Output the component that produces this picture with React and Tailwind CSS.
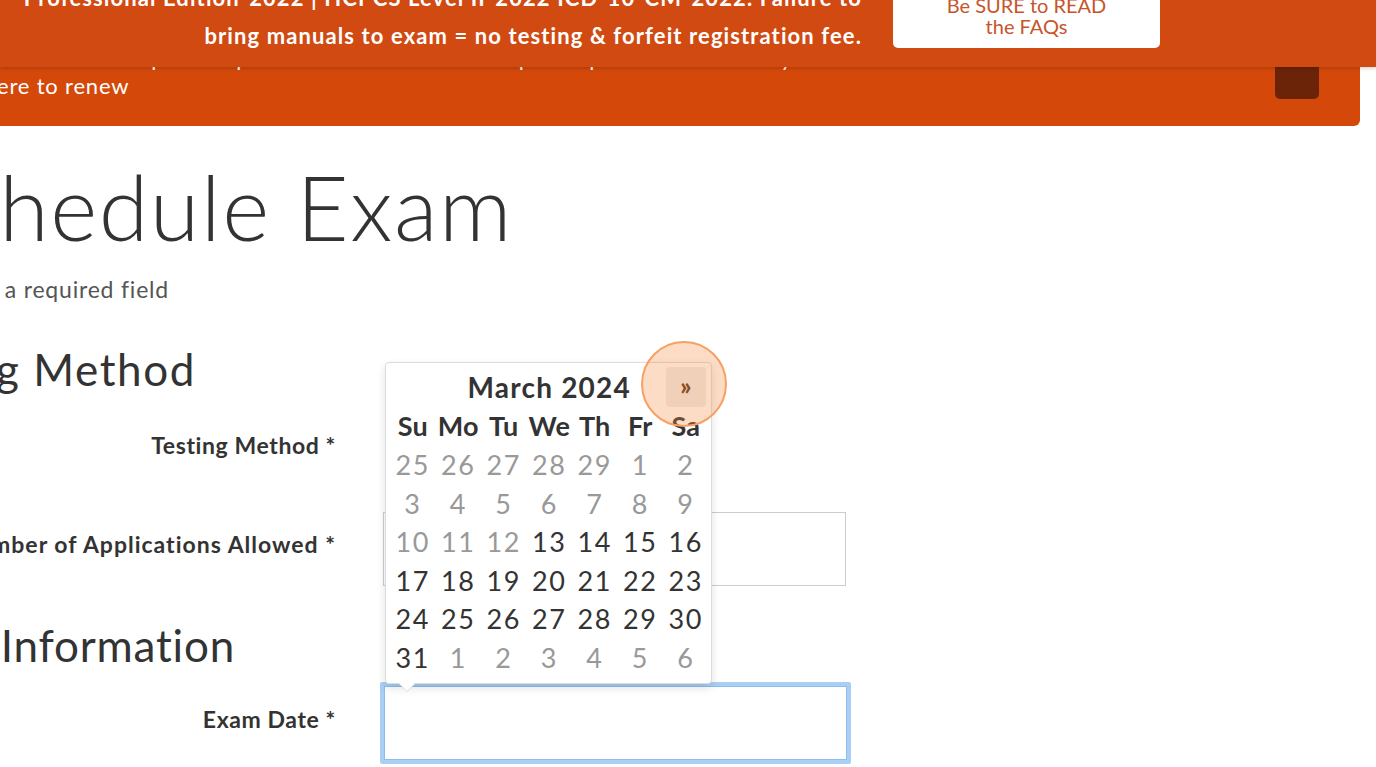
import React from "react";

const weeks = [
  [[25, 0], [26, 0], [27, 0], [28, 0], [29, 0], [1, 0], [2, 0]],
  [[3, 0], [4, 0], [5, 0], [6, 0], [7, 0], [8, 0], [9, 0]],
  [[10, 0], [11, 0], [12, 0], [13, 1], [14, 1], [15, 1], [16, 1]],
  [[17, 1], [18, 1], [19, 1], [20, 1], [21, 1], [22, 1], [23, 1]],
  [[24, 1], [25, 1], [26, 1], [27, 1], [28, 1], [29, 1], [30, 1]],
  [[31, 1], [1, 0], [2, 0], [3, 0], [4, 0], [5, 0], [6, 0]],
];

const dows = ["Su", "Mo", "Tu", "We", "Th", "Fr", "Sa"];

function Calendar() {
  return (
    <div className="absolute left-[385px] top-[362px] z-10 w-[327px] rounded-[4px] border border-[#dcdcdc] bg-white px-1 pt-1 pb-[6px] shadow-[0_4px_10px_rgba(0,0,0,0.12)]">
      {/* Pointer */}
      <div className="absolute -bottom-[9px] left-[12px] h-0 w-0 border-x-[9px] border-t-[9px] border-x-transparent border-t-[#dcdcdc]" />
      <div className="absolute -bottom-[8px] left-[13px] h-0 w-0 border-x-[8px] border-t-[8px] border-x-transparent border-t-white" />

      <div className="grid grid-cols-[repeat(7,45.5px)] text-center leading-none text-[#333]">
        <div className="h-[40px]" />
        <div className="col-span-5 flex h-[40px] items-center justify-center text-[28px] font-bold tracking-[1.2px]">
          March 2024
        </div>
        <div className="flex h-[40px] items-center justify-center">
          <div className="flex h-[40px] w-[40px] items-center justify-center rounded-[4px] bg-[#eeeeee] pb-[2px] text-[24px] font-black text-[#5a3420]">
            »
          </div>
        </div>

        {dows.map((d) => (
          <div key={d} className="flex h-[38.5px] items-center justify-center pb-[2px] text-[27px] font-bold tracking-[0.2px]">
            {d}
          </div>
        ))}

        {weeks.map((week, i) =>
          week.map(([n, active], j) => (
            <div
              key={`${i}-${j}`}
              className={`flex h-[38.5px] items-center justify-center text-[27px] tracking-[1.5px] ${
                active ? "text-[#333]" : "text-[#999]"
              }`}
            >
              {n}
            </div>
          ))
        )}
      </div>
    </div>
  );
}

export default function App() {
  return (
    <div className="relative h-[767px] w-[1376px] overflow-hidden bg-white font-['Lato',sans-serif] text-[#333]">
      {/* Fixed notice bar, lies over the renewal bar */}
      <div className="absolute inset-x-0 top-0 z-20 flex h-[67px] bg-[#d14a12] shadow-[0_2px_3px_rgba(0,0,0,0.15)]">
        <div className="-ml-[240px] -mt-[21px] w-[1102px] shrink-0 text-right text-[22px] font-bold leading-[38px] tracking-[1.1px] text-white">
          <p className="whitespace-nowrap">Professional Edition-2022 | HCPCS Level II-2022 ICD-10-CM-2022. Failure to</p>
          <p className="whitespace-nowrap">bring manuals to exam = no testing &amp; forfeit registration fee.</p>
        </div>
        <div className="ml-[31px] -mt-[14px] flex h-[62px] w-[267px] flex-col items-center justify-center rounded-b-[5px] bg-white pb-[3px] text-[20px] leading-[21px] text-[#c8542b]">
          <span>Be SURE to READ</span>
          <span>the FAQs</span>
        </div>
      </div>

      {/* Renewal bar */}
      <div className="mr-[16px] flex h-[126px] justify-between rounded-br-[6px] bg-[#d4490a] text-white">
        <div className="-ml-[16px] pt-[44px] text-[22px] leading-[28px] tracking-[0.8px]">
          <p className="whitespace-nowrap">Your membership has expired. An active membership is required to schedule your exam. Please click</p>
          <p className="whitespace-nowrap">here to renew</p>
        </div>
        <div className="mr-[41px] mt-[60px] h-[39px] w-[44px] shrink-0 rounded-b-[5px] bg-[#6b2407]" />
      </div>

      {/* Form */}
      <div className="-ml-[116px] mt-[30px] flex flex-col">
        <div className="flex w-[629px] justify-end">
          <h1 className="whitespace-nowrap text-[90px] font-light leading-[100px] tracking-[1.5px] text-[#333]">
            Schedule Exam
          </h1>
        </div>
        <div className="mt-[21px] flex w-[285px] justify-end">
          <p className="whitespace-nowrap text-[23px] leading-[24px] tracking-[0.8px] text-[#555]">
            * Indicates a required field
          </p>
        </div>

        <div className="mt-[42px] flex w-[312px] justify-end">
          <h2 className="whitespace-nowrap text-[44px] leading-[52px] tracking-[1.6px]">Testing Method</h2>
        </div>

        <div className="mt-[38px] flex items-center">
          <label className="w-[452px] text-right text-[23px] font-bold leading-[24px] tracking-[0.6px]">
            Testing Method *
          </label>
        </div>

        <div className="mt-[55px] flex items-start gap-[47px]">
          <label className="mt-[20px] w-[452px] whitespace-nowrap text-right text-[23px] font-bold leading-[24px] tracking-[1px]">
            Number of Applications Allowed *
          </label>
          <input className="h-[74px] w-[463px] border border-[#cccccc] bg-white" />
        </div>

        <div className="mt-[33px] flex w-[351px] justify-end">
          <h2 className="whitespace-nowrap text-[44px] leading-[52px] tracking-[0.8px]">Exam Information</h2>
        </div>

        <div className="mt-[11px] flex items-start gap-[44px]">
          <label className="mt-[25px] w-[452px] text-right text-[23px] font-bold leading-[24px] tracking-[0.6px]">
            Exam Date *
          </label>
          <input className="h-[82px] w-[471px] rounded-[2px] border-[4px] border-[#a9cff5] bg-white outline-none ring-[1px] ring-inset ring-[#8dbdee]" />
        </div>
      </div>

      <Calendar />

      {/* Click highlight */}
      <div className="pointer-events-none absolute left-[641px] top-[341px] z-30 h-[86px] w-[86px] rounded-full border-2 border-[#f7a064] bg-[#f58a3c]/30" />
    </div>
  );
}
